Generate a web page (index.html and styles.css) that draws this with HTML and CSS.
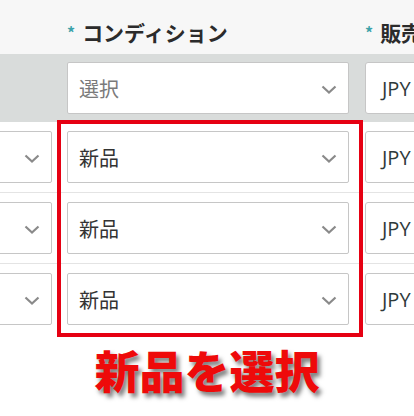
FILE: index.html
```html
<!DOCTYPE html>
<html lang="ja">
<head>
<meta charset="utf-8">
<link rel="stylesheet" href="styles.css">
</head>
<body>
<div class="page">
  <div class="table">
    <div class="row head">
      <div class="cell"></div>
      <div class="cell label"><span class="req">*</span>コンディション</div>
      <div class="cell label c2"><span class="req">*</span>販売</div>
    </div>
    <div class="row band">
      <div class="cell"></div>
      <div class="cell"><div class="select"><span class="ph">選択</span><svg class="chev" viewBox="0 0 16 9"><path d="M1.5 1.5 L8 7.5 L14.5 1.5"/></svg></div></div>
      <div class="cell c2"><div class="select jpy">JPY</div></div>
    </div>
    <div class="row data">
      <div class="cell"><div class="select"><span></span><svg class="chev" viewBox="0 0 16 9"><path d="M1.5 1.5 L8 7.5 L14.5 1.5"/></svg></div></div>
      <div class="cell"><div class="select"><span>新品</span><svg class="chev" viewBox="0 0 16 9"><path d="M1.5 1.5 L8 7.5 L14.5 1.5"/></svg></div></div>
      <div class="cell c2"><div class="select jpy">JPY</div></div>
    </div>
    <div class="row data">
      <div class="cell"><div class="select"><span></span><svg class="chev" viewBox="0 0 16 9"><path d="M1.5 1.5 L8 7.5 L14.5 1.5"/></svg></div></div>
      <div class="cell"><div class="select"><span>新品</span><svg class="chev" viewBox="0 0 16 9"><path d="M1.5 1.5 L8 7.5 L14.5 1.5"/></svg></div></div>
      <div class="cell c2"><div class="select jpy">JPY</div></div>
    </div>
    <div class="row data last">
      <div class="cell"><div class="select"><span></span><svg class="chev" viewBox="0 0 16 9"><path d="M1.5 1.5 L8 7.5 L14.5 1.5"/></svg></div></div>
      <div class="cell"><div class="select"><span>新品</span><svg class="chev" viewBox="0 0 16 9"><path d="M1.5 1.5 L8 7.5 L14.5 1.5"/></svg></div></div>
      <div class="cell c2"><div class="select jpy">JPY</div></div>
    </div>
  </div>
  <div class="highlight"></div>
  <div class="caption">新品を選択</div>
</div>
</body>
</html>
```
FILE: styles.css
```css
html, body {
  margin: 0;
  padding: 0;
  background: #ffffff;
}
body {
  width: 414px;
  height: 416px;
  overflow: hidden;
  font-family: "Noto Sans CJK JP", "Open Sans", sans-serif;
  color: #333;
}
.page {
  position: relative;
  width: 414px;
  height: 416px;
  overflow: hidden;
}
.table {
  margin-left: -68px;
  width: 560px;
}
.row {
  display: grid;
  grid-template-columns: 120px 282px 120px;
  column-gap: 15px;
}
.c2 {
  margin-left: 1px;
}
.head {
  height: 54px;
  background: #f7f7f7;
  align-items: start;
}
.label {
  padding-top: 19px;
  font-size: 21px;
  line-height: 26px;
  font-weight: 700;
  color: #2b2b2b;
  white-space: nowrap;
}
.req {
  color: #3ea3aa;
  font-size: 16px;
  font-weight: 700;
  margin-right: 7px;
  vertical-align: 2px;
}
.band {
  background: #d9dcdb;
  padding: 8px 0;
}
.data {
  padding: 9px 0;
  border-bottom: 1px solid #e4e4e4;
}
.data.last {
  border-bottom: none;
}
.select {
  box-sizing: border-box;
  height: 52px;
  background: #fff;
  border: 1px solid #c6c6c6;
  border-radius: 2px;
  display: flex;
  align-items: center;
  justify-content: space-between;
  padding: 0 11px 0 11px;
  font-size: 20px;
  color: #333;
}
.select .ph {
  color: #7a7a7a;
}
.chev {
  width: 16px;
  height: 9px;
  margin-top: 3px;
  fill: none;
  stroke: #8a8a8a;
  stroke-width: 2.2;
}
.jpy {
  border-radius: 3px;
  padding-left: 16px;
  font-family: "Open Sans", sans-serif;
  font-size: 20px;
  color: #2f3a3a;
}
.highlight {
  position: absolute;
  left: 57px;
  top: 120px;
  width: 306px;
  height: 217px;
  box-sizing: border-box;
  border: 4px solid #e60012;
}
.caption {
  text-align: center;
  padding-top: 11px;
  font-size: 45px;
  line-height: 50px;
  font-weight: 900;
  color: #ee0a0a;
  -webkit-text-stroke: 4px #fff;
  paint-order: stroke fill;
  text-shadow: 3px 4px 4px rgba(0, 0, 0, 0.5);
}
```
